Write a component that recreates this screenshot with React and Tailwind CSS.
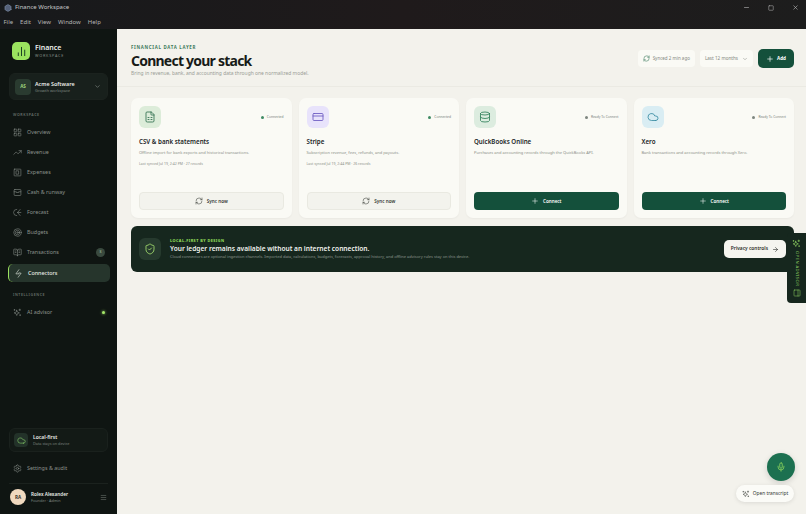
import {
  ArrowRight,
  BookOpenText,
  ChartNoAxesColumn,
  ChevronDown,
  Cloud,
  CreditCard,
  Database,
  FileSpreadsheet,
  Hexagon,
  LayoutGrid,
  Menu,
  Mic,
  Minus,
  PanelRight,
  Plus,
  RefreshCw,
  Settings,
  ShieldCheck,
  Square,
  Target,
  TrendingUp,
  X,
} from "lucide-react";

// icons lucide has no close match for
function Svg({ size = 9, strokeWidth = 1.5, className, children }) {
  return (
    <svg
      width={size}
      height={size}
      viewBox="0 0 24 24"
      fill="none"
      stroke="currentColor"
      strokeWidth={strokeWidth}
      strokeLinecap="round"
      strokeLinejoin="round"
      className={className}
    >
      {children}
    </svg>
  );
}

const ExpensesIcon = (props) => (
  <Svg {...props}>
    <rect x="3" y="3" width="18" height="18" rx="1.5" />
    <rect x="9" y="7.5" width="6" height="9" />
  </Svg>
);

const CashIcon = (props) => (
  <Svg {...props}>
    <rect x="3" y="4" width="18" height="16" rx="2" />
    <path d="M3 10h6v2h6v-2h6" />
  </Svg>
);

const ForecastIcon = (props) => (
  <Svg {...props}>
    <path d="M10 3.5a8.5 8.5 0 0 0 0 17" />
    <path d="M19 4l-7 8 7 8" />
    <path d="M12 12h9" />
  </Svg>
);

const ConnectorIcon = (props) => (
  <Svg {...props}>
    <path d="M13 2 5 13h5l3-3" />
    <path d="M11 22l8-11h-5l-3 3" />
  </Svg>
);

const AdvisorIcon = (props) => (
  <Svg {...props}>
    <path d="M10 6l2 5 5 2-5 2-2 5-2-5-5-2 5-2z" />
    <path d="M18 3v4M16 5h4" />
    <path d="M19 18v2M18 19h2" />
    <path d="M4 4v2M3 5h2" />
  </Svg>
);

const navItems = [
  { label: "Overview", icon: LayoutGrid },
  { label: "Revenue", icon: TrendingUp },
  { label: "Expenses", icon: ExpensesIcon },
  { label: "Cash & runway", icon: CashIcon },
  { label: "Forecast", icon: ForecastIcon },
  { label: "Budgets", icon: Target },
  { label: "Transactions", icon: BookOpenText, badge: "3" },
];

const connectors = [
  {
    name: "CSV & bank statements",
    desc: "Offline import for bank exports and historical transactions.",
    synced: "Last synced Jul 19, 2:42 PM · 27 records",
    icon: FileSpreadsheet,
    tint: "bg-[#dcecd9] text-[#2f6f4f]",
    connected: true,
  },
  {
    name: "Stripe",
    desc: "Subscription revenue, fees, refunds, and payouts.",
    synced: "Last synced Jul 19, 2:44 PM · 26 records",
    icon: CreditCard,
    tint: "bg-[#e8e3fb] text-[#6a58c0]",
    connected: true,
  },
  {
    name: "QuickBooks Online",
    desc: "Purchases and accounting records through the QuickBooks API.",
    icon: Database,
    tint: "bg-[#dcecdf] text-[#2e8058]",
  },
  {
    name: "Xero",
    desc: "Bank transactions and accounting records through Xero.",
    icon: Cloud,
    tint: "bg-[#d9edf3] text-[#3a8ca3]",
  },
];

function ConnectorCard({ item }) {
  const Icon = item.icon;
  return (
    <div className="flex h-[120px] flex-col rounded-[7px] bg-[#fafaf5] p-2 shadow-[0_1px_2px_rgba(0,0,0,0.04)]">
      <div className="flex items-center justify-between">
        <div className={`flex h-[22px] w-[22px] items-center justify-center rounded-[6px] ${item.tint}`}>
          <Icon size={12} strokeWidth={1.7} />
        </div>
        <div className="flex items-center gap-[3px] text-[3.3px] text-[#77807a]">
          <span className={`h-[3px] w-[3px] rounded-full ${item.connected ? "bg-[#3f8a63]" : "bg-[#7d857f]"}`} />
          {item.connected ? "Connected" : "Ready To Connect"}
        </div>
      </div>
      <div className="mt-[8.5px] text-[6.2px] leading-[10px] font-semibold text-[#20241f]">{item.name}</div>
      <div className="mt-[3px] text-[4px] leading-[6px] text-[#8b8f88]">{item.desc}</div>
      {item.synced && <div className="mt-[5px] text-[3.5px] leading-[5px] text-[#8b8f88]">{item.synced}</div>}
      <div className="flex-1" />
      {item.connected ? (
        <button className="flex h-[18px] items-center justify-center gap-[4px] rounded-[4px] border border-[#e9e9e1] bg-[#f3f3ed] text-[4.6px] font-semibold text-[#343833]">
          <RefreshCw size={8} strokeWidth={1.6} /> Sync now
        </button>
      ) : (
        <button className="flex h-[18px] items-center justify-center gap-[4px] rounded-[4px] bg-[#14503b] text-[4.6px] font-semibold text-white">
          <Plus size={8} strokeWidth={1.6} /> Connect
        </button>
      )}
    </div>
  );
}

function NavRow({ item }) {
  const Icon = item.icon;
  return (
    <div className="flex h-5 items-center gap-[5px] pl-[9px] pr-[8px] text-[5.4px] text-[#8b928c]">
      <Icon size={9} strokeWidth={1.5} />
      <span className="flex-1">{item.label}</span>
      {item.badge && (
        <span className="flex h-[9px] w-[9px] items-center justify-center rounded-full bg-[#3a4a3f] text-[4px] text-[#a9c9a4]">
          {item.badge}
        </span>
      )}
    </div>
  );
}

export default function App() {
  return (
    <div className="relative flex h-[514px] w-[806px] flex-col overflow-hidden bg-[#f3f2ec] font-['Noto_Sans',sans-serif]">
      {/* window chrome */}
      <div className="flex h-[29px] shrink-0 flex-col bg-gradient-to-r from-[#17191b] via-[#1f1a1b] to-[#1d1d1d] text-[#c9c9c9]">
        <div className="flex h-[15px] items-center pl-[4px]">
          <Hexagon size={8} className="text-[#7f8fa8]" fill="#55617a" />
          <span className="ml-[3px] text-[6px]">Finance Workspace</span>
          <div className="ml-auto flex items-center gap-[18px] pr-[7px] text-[#bdbdbd]">
            <Minus size={7} />
            <Square size={6} />
            <X size={7} />
          </div>
        </div>
        <div className="flex h-[14px] items-center gap-[7px] pl-[3.5px] text-[6px] text-[#b5b5b5]">
          <span>File</span>
          <span>Edit</span>
          <span>View</span>
          <span>Window</span>
          <span>Help</span>
        </div>
      </div>

      <div className="flex min-h-0 flex-1">
        {/* sidebar */}
        <aside className="flex w-[117px] shrink-0 flex-col bg-[#0f1512] px-[9px]">
          <div className="mt-[13px] flex items-center gap-[5px] pl-[3px]">
            <div className="flex h-[18px] w-[18px] items-center justify-center rounded-[5px] bg-[#9be35f] text-[#12331f]">
              <ChartNoAxesColumn size={11} strokeWidth={2} />
            </div>
            <div>
              <div className="text-[7px] leading-[9px] font-semibold text-[#eef1ec]">Finance</div>
              <div className="text-[3.8px] leading-[7px] tracking-[0.2em] text-[#828a84]">WORKSPACE</div>
            </div>
          </div>

          <div className="mt-[13px] flex h-[27px] items-center gap-[4px] rounded-[6px] border border-[#1b221e] bg-[#18201c] px-[5px]">
            <div className="flex h-[16px] w-[16px] items-center justify-center rounded-[4px] bg-[#2a3b30] text-[4.6px] font-bold text-[#9fd47d]">
              AS
            </div>
            <div className="flex-1">
              <div className="text-[5.4px] leading-[8px] font-semibold text-[#e8ebe6]">Acme Software</div>
              <div className="text-[4px] leading-[6px] text-[#7f8781]">Growth workspace</div>
            </div>
            <ChevronDown size={7} className="mr-[1px] text-[#89918b]" />
          </div>

          <div className="mt-[12px] pl-[4px] text-[3.6px] leading-[6px] font-semibold tracking-[0.16em] text-[#667069]">WORKSPACE</div>
          <nav className="mt-[4px] -mx-[5px]">
            {navItems.map((item) => (
              <NavRow key={item.label} item={item} />
            ))}
          </nav>
          <div className="relative mt-[2px] -ml-[1px] flex h-[18px] w-[102px] items-center gap-[5px] rounded-[5px] border-l-[1.5px] border-[#9be35f] bg-[#26352c] pl-[5px] text-[5.4px] font-medium text-[#e6ebe4]">
            <ConnectorIcon size={9} strokeWidth={1.7} className="text-[#d5dcd3]" />
            Connectors
          </div>
          <div className="mt-[10px] pl-[4px] text-[3.6px] leading-[6px] font-semibold tracking-[0.16em] text-[#667069]">INTELLIGENCE</div>
          <div className="mt-[4px] -mx-[5px] flex h-5 items-center gap-[5px] pl-[9px] pr-[8px] text-[5.4px] text-[#8b928c]">
            <AdvisorIcon size={9} strokeWidth={1.5} />
            <span className="flex-1">AI advisor</span>
            <span className="h-[3px] w-[3px] rounded-full bg-[#a5e86a] shadow-[0_0_3px_#a5e86a]" />
          </div>

          <div className="flex-1" />

          <div className="flex h-[24px] items-center gap-[5px] rounded-[6px] border border-[#1a211d] bg-[#131a16] px-[4px]">
            <div className="flex h-[14px] w-[14px] items-center justify-center rounded-[4px] bg-[#233229] text-[#86d06a]">
              <Cloud size={9} strokeWidth={1.6} />
            </div>
            <div className="-mt-[1px]">
              <div className="text-[5px] leading-[7px] font-semibold text-[#e8ebe6]">Local-first</div>
              <div className="text-[3.8px] leading-[5px] text-[#7c847e]">Data stays on device</div>
            </div>
          </div>
          <div className="mt-[6px] flex h-[20px] items-center gap-[5px] pl-[4px] text-[5.4px] text-[#8b928c]">
            <Settings size={9} strokeWidth={1.5} />
            Settings & audit
          </div>
          <div className="mt-[5px] flex h-[31px] items-start gap-[5px] border-t border-[#1b221e] pl-[1px] pr-[1px] pt-[5px]">
            <div className="flex h-[16px] w-[16px] items-center justify-center rounded-full bg-[#f0d9bf] text-[4.6px] font-bold text-[#39332b]">
              RA
            </div>
            <div className="flex-1 pt-[2px]">
              <div className="text-[4.7px] leading-[7px] font-semibold text-[#e8ebe6]">Rolex Alexander</div>
              <div className="text-[3.8px] leading-[5px] text-[#7c847e]">Founder · Admin</div>
            </div>
            <Menu size={7} className="mt-[5px] text-[#6d756f]" />
          </div>
        </aside>

        {/* main */}
        <main className="min-w-0 flex-1">
          <header className="flex h-[58px] items-start justify-between border-b border-[#ebeae3] pl-[14px] pr-[12px] pt-[15px]">
            <div>
              <div className="text-[4.4px] leading-[6px] font-bold tracking-[0.16em] text-[#3d7a5a]">FINANCIAL DATA LAYER</div>
              <h1 className="mt-[2px] text-[14px] leading-[17px] font-bold tracking-[-0.055em] text-[#171b18]">Connect your stack</h1>
              <p className="mt-[1px] text-[4.95px] leading-[6px] text-[#9a9d96]">Bring in revenue, bank, and accounting data through one normalized model.</p>
            </div>
            <div className="mt-[5px] flex items-center gap-[5px]">
              <div className="flex h-[17px] items-center gap-[3px] rounded-[4px] bg-[#fafaf5] px-[5px] text-[4.5px] text-[#858982]">
                <RefreshCw size={7} className="text-[#3f7d60]" /> Synced 2 min ago
              </div>
              <div className="flex h-[17px] items-center gap-[4px] rounded-[4px] bg-[#fafaf5] px-[5px] text-[4.6px] text-[#858982]">
                Last 12 months <ChevronDown size={6} />
              </div>
              <button className="flex h-[19px] items-center gap-[3px] rounded-[5px] bg-[#14503b] px-[8px] text-[4.6px] font-bold text-white">
                <Plus size={8} /> Add
              </button>
            </div>
          </header>

          <div className="pl-[14px] pr-[12px] pt-[11px]">
            <div className="grid grid-cols-4 gap-[7px]">
              {connectors.map((item) => (
                <ConnectorCard key={item.name} item={item} />
              ))}
            </div>
            <div className="mt-[8px] flex h-[46px] items-center rounded-[6px] bg-[#16271e] pl-[8px] pr-[8px]">
              <div className="flex h-[22px] w-[22px] items-center justify-center rounded-[6px] bg-[#263a2e] text-[#a5e06f]">
                <ShieldCheck size={12} strokeWidth={1.7} />
              </div>
              <div className="ml-[9px] flex-1">
                <div className="text-[3.8px] leading-[6px] font-bold tracking-[0.12em] text-[#9be35f]">LOCAL-FIRST BY DESIGN</div>
                <div className="text-[6.6px] leading-[10px] font-semibold text-[#f1f3ee]">Your ledger remains available without an internet connection.</div>
                <div className="text-[3.97px] leading-[6px] text-[#8d978f]">
                  Cloud connectors are optional ingestion channels. Imported data, calculations, budgets, forecasts, approval history, and offline advisory rules stay on this device.
                </div>
              </div>
              <button className="flex h-[18px] items-center gap-[4px] rounded-[5px] bg-[#f5f5ef] px-[7px] text-[4.8px] font-semibold text-[#2b2f2b]">
                Privacy controls <ArrowRight size={7} />
              </button>
            </div>
          </div>
        </main>
      </div>

      {/* floating advisor */}
      <div className="absolute right-0 top-[233px] flex h-[70px] w-[19px] flex-col items-center justify-between rounded-l-[4px] bg-[#16271e] py-[6px] text-[#8ed060]">
        <AdvisorIcon size={9} strokeWidth={1.8} />
        <span className="text-[4.2px] tracking-[0.1em] [writing-mode:vertical-rl]">OPEN ADVISOR</span>
        <PanelRight size={8} strokeWidth={1.6} />
      </div>
      <button className="absolute left-[767px] top-[453px] flex h-[28px] w-[28px] items-center justify-center rounded-full bg-[#1c7050] text-[#9be35f] shadow-[0_2px_6px_rgba(0,0,0,0.15)]">
        <Mic size={10} strokeWidth={1.7} />
      </button>
      <button className="absolute left-[736px] top-[485px] flex h-[17px] w-[58px] items-center justify-center gap-[3px] rounded-full bg-[#fbfbf7] text-[4.8px] text-[#343833] shadow-[0_1px_4px_rgba(0,0,0,0.1)]">
        <AdvisorIcon size={8} /> Open transcript
      </button>
    </div>
  );
}
